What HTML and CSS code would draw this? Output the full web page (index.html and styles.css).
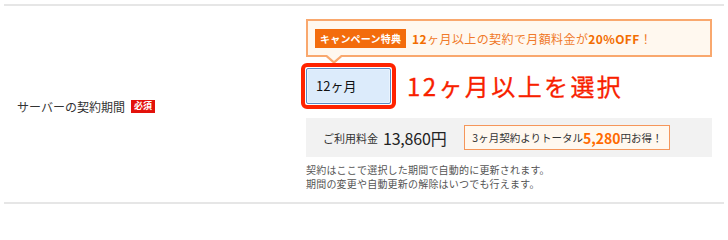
FILE: index.html
```html
<!DOCTYPE html>
<html lang="ja">
<head>
<meta charset="utf-8">
<link rel="stylesheet" href="styles.css">
</head>
<body>
<div class="row">
  <div class="label-col">
    <span class="label">サーバーの契約期間</span>
    <span class="required">必須</span>
  </div>
  <div class="field-col">
    <div class="campaign">
      <span class="campaign-badge">キャンペーン特典</span>
      <span class="campaign-text"><b>12</b>ヶ月以上の契約で月額料金が<b>20%OFF</b>！</span>
    </div>
    <div class="select-line">
      <div class="select-wrap">
        <div class="select">12ヶ月</div>
      </div>
      <span class="annotation">12ヶ月以上を選択</span>
    </div>
    <div class="price-box">
      <span class="price-label">ご利用料金</span>
      <span class="price">13,860円</span>
      <span class="saving">3ヶ月契約よりトータル<b>5,280</b>円お得！</span>
    </div>
    <p class="notes">契約はここで選択した期間で自動的に更新されます。<br>期間の変更や自動更新の解除はいつでも行えます。</p>
  </div>
</div>
</body>
</html>
```

FILE: styles.css
```css
* { box-sizing: border-box; }
body {
  margin: 0;
  background: #fff;
  font-family: "Noto Sans CJK JP", "Noto Sans", sans-serif;
  color: #333;
}
.row {
  margin: 4px 4px 0 4px;
  width: 720px;
  height: 200px;
  border-top: 2px solid #e6e6e6;
  border-bottom: 2px solid #e6e6e6;
  display: flex;
}
.label-col {
  width: 302px;
  padding-left: 13px;
  padding-top: 4px;
  display: flex;
  align-items: center;
  gap: 6px;
}
.label {
  font-size: 12px;
  color: #333;
}
.required {
  background: #e3120b;
  color: #fff;
  font-size: 9px;
  font-weight: bold;
  line-height: 12px;
  padding: 0 3px;
  height: 13px;
  display: inline-flex;
  align-items: center;
}
.field-col {
  width: 406px;
  padding-top: 13px;
}
.campaign {
  position: relative;
  height: 38px;
  border: 2px solid #f9a86e;
  background: #fff8ef;
  display: flex;
  align-items: center;
  padding-left: 7px;
  gap: 6px;
}
.campaign::before,
.campaign::after {
  content: "";
  position: absolute;
  left: 18px;
  border-style: solid;
  border-color: transparent;
}
.campaign::before {
  bottom: -9px;
  border-width: 7px 8px 0 8px;
  border-top-color: #f9a86e;
}
.campaign::after {
  bottom: -6px;
  left: 19px;
  border-width: 6px 7px 0 7px;
  border-top-color: #fff8ef;
}
.campaign-badge {
  background: #f36c0c;
  color: #fff;
  font-size: 10px;
  font-weight: bold;
  height: 19px;
  line-height: 19px;
  padding: 0 5px;
  letter-spacing: 0.2px;
}
.campaign-text {
  font-size: 12px;
  color: #f07a2a;
  letter-spacing: 0.4px;
}
.campaign-text b {
  color: #f26d00;
}
.select-line {
  margin-top: 11px;
  display: flex;
  align-items: center;
  height: 36px;
}
.select-wrap {
  position: relative;
}
.select-wrap::after {
  content: "";
  position: absolute;
  inset: -5px;
  border: 4px solid #ff2300;
  border-radius: 6px;
}
.select {
  width: 85px;
  height: 36px;
  border: 1px solid #5a8bc6;
  box-shadow: inset 0 0 0 1px #eaf3fd;
  background: #dcebfb;
  border-radius: 2px;
  font-size: 13px;
  color: #111;
  line-height: 34px;
  padding-left: 9px;
}
.annotation {
  margin-left: 16px;
  font-size: 24px;
  color: #f81f00;
  letter-spacing: 2.4px;
  line-height: 1;
  -webkit-text-stroke: 0.3px #f81f00;
}
.price-box {
  margin-top: 14px;
  height: 39px;
  background: #f2f2f2;
  display: flex;
  align-items: center;
  padding-left: 17px;
}
.price-label {
  font-size: 11px;
  color: #333;
}
.price {
  margin-left: 5px;
  font-size: 16px;
  color: #222;
  letter-spacing: -0.2px;
}
.saving {
  margin-left: 18px;
  width: 206px;
  height: 25px;
  border: 1px solid #f5965a;
  background: #fff8ef;
  font-size: 10.5px;
  color: #333;
  display: flex;
  align-items: center;
  justify-content: center;
  white-space: nowrap;
}
.saving b {
  color: #ff6a00;
  font-size: 14px;
}
.notes {
  margin: 6px 0 0 0;
  font-size: 10px;
  line-height: 14px;
  color: #555;
  letter-spacing: 0.2px;
}
```
